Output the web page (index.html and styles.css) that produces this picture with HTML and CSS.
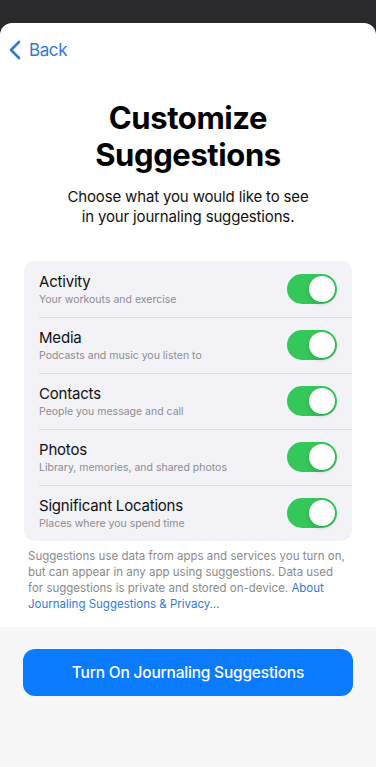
FILE: index.html
```html
<!DOCTYPE html>
<html lang="en">
<head>
<meta charset="utf-8">
<title>Customize Suggestions</title>
<link rel="stylesheet" href="styles.css">
</head>
<body>
<div class="sheet">
  <div class="content">
    <nav class="nav">
      <a class="back" href="#">
        <svg class="chev" width="12" height="20" viewBox="0 0 12 20"><path d="M10 2 L2 10 L10 18" fill="none" stroke="currentColor" stroke-width="2.6" stroke-linecap="round" stroke-linejoin="round"/></svg>
        <span>Back</span>
      </a>
    </nav>
    <h1 class="title">Customize<br>Suggestions</h1>
    <p class="subtitle">Choose what you would like to see<br>in your journaling suggestions.</p>
    <ul class="card">
      <li class="row">
        <div class="text"><div class="label">Activity</div><div class="desc">Your workouts and exercise</div></div>
        <span class="toggle"></span>
      </li>
      <li class="row">
        <div class="text"><div class="label">Media</div><div class="desc">Podcasts and music you listen to</div></div>
        <span class="toggle"></span>
      </li>
      <li class="row">
        <div class="text"><div class="label">Contacts</div><div class="desc">People you message and call</div></div>
        <span class="toggle"></span>
      </li>
      <li class="row">
        <div class="text"><div class="label">Photos</div><div class="desc">Library, memories, and shared photos</div></div>
        <span class="toggle"></span>
      </li>
      <li class="row">
        <div class="text"><div class="label">Significant Locations</div><div class="desc">Places where you spend time</div></div>
        <span class="toggle"></span>
      </li>
    </ul>
    <p class="note">Suggestions use data from apps and services you turn on, but can appear in any app using suggestions. Data used for suggestions is private and stored on-device. <a href="#">About Journaling Suggestions &amp; Privacy…</a></p>
  </div>
  <div class="footer">
    <button class="cta">Turn On Journaling Suggestions</button>
  </div>
</div>
</body>
</html>
```
FILE: styles.css
```css
* { box-sizing: border-box; }
html, body { margin: 0; padding: 0; }
body {
  background: #2a2a2c;
  font-family: Inter, "Noto Sans", sans-serif;
  width: 376px;
  height: 767px;
  overflow: hidden;
  padding-top: 23px;
}
.sheet {
  background: #ffffff;
  border-radius: 12px 12px 0 0;
  height: 744px;
  display: flex;
  flex-direction: column;
  overflow: hidden;
}
.content {
  height: 604px;
  padding: 0 24px;
}
.nav {
  height: 54px;
  display: flex;
  align-items: center;
  margin-left: -15px;
}
.back {
  display: flex;
  align-items: center;
  gap: 8px;
  color: #2f7bd8;
  text-decoration: none;
  font-size: 17px;
  letter-spacing: -0.4px;
}
.chev { display: block; }
.title {
  margin: 22px 0 0;
  text-align: center;
  font-size: 31px;
  line-height: 37px;
  font-weight: 700;
  letter-spacing: -0.4px;
  color: #000;
}
.subtitle {
  margin: 14px 0 0;
  text-align: center;
  font-size: 15px;
  line-height: 20px;
  color: #111;
  letter-spacing: -0.15px;
}
.card {
  list-style: none;
  margin: 34px 0 0;
  padding: 0;
  background: #f2f2f7;
  border-radius: 10px;
  overflow: hidden;
}
.row {
  height: 56px;
  display: flex;
  align-items: center;
  justify-content: space-between;
  padding: 0 15px 0 15px;
  position: relative;
}
.row + .row::before {
  content: "";
  position: absolute;
  top: 0;
  left: 15px;
  right: 0;
  height: 1px;
  background: #dcdce0;
}
.label {
  font-size: 15px;
  line-height: 20px;
  color: #111;
  letter-spacing: -0.2px;
}
.desc {
  font-size: 10.5px;
  line-height: 14px;
  color: #8d8d92;
  margin-top: 1px;
}
.toggle {
  width: 50px;
  height: 30px;
  border-radius: 15px;
  background: #34c759;
  position: relative;
  flex-shrink: 0;
}
.toggle::after {
  content: "";
  position: absolute;
  right: 2px;
  top: 2px;
  width: 26px;
  height: 26px;
  border-radius: 50%;
  background: #fff;
  box-shadow: 0 2px 4px rgba(0,0,0,0.15);
}
.note {
  margin: 7px 0 0;
  padding: 0 4px;
  font-size: 11.5px;
  line-height: 16px;
  color: #8a8a8e;
}
.note a { color: #2f7bd8; text-decoration: none; }
.footer {
  flex: 1;
  background: #f7f7f7;
  padding: 22px 23px 0 23px;
}
.cta {
  width: 100%;
  height: 47px;
  border: 0;
  border-radius: 12px;
  background: #0a7aff;
  color: #fff;
  font-family: Inter, "Noto Sans", sans-serif;
  font-size: 15.5px;
  font-weight: 500;
  letter-spacing: -0.2px;
}
```
